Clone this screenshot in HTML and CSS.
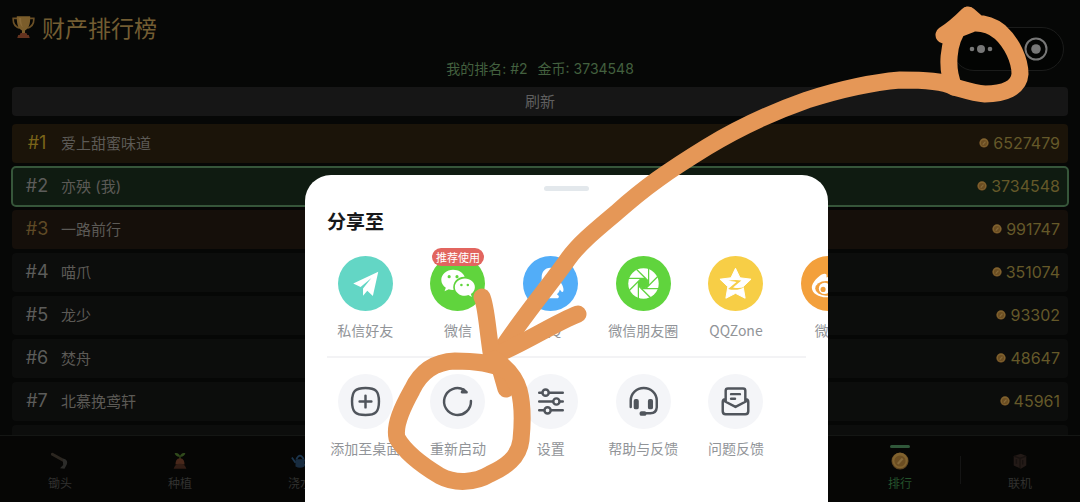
FILE: index.html
```
<!DOCTYPE html>
<html lang="zh-CN">
<head>
<meta charset="utf-8">
<meta name="viewport" content="width=device-width, initial-scale=1">
<title>财产排行榜</title>
<link rel="stylesheet" href="styles.css">
</head>
<body>
<svg class="defs" aria-hidden="true">
  <symbol id="coin" viewBox="0 0 20 20">
    <circle cx="10" cy="10" r="9.5" fill="#5e4420"/>
    <circle cx="10" cy="9.4" r="8.6" fill="#80622e"/>
    <circle cx="10" cy="10" r="6.2" fill="#6b4d22"/>
    <path d="M6.5 12.5 L12 6.5 L13.8 8 L8.5 13.8Z" fill="#85693a"/>
  </symbol>
</svg>
<div class="game">
  <header class="top">
    <h1 class="title">
      <svg class="trophy" viewBox="0 0 24 24" aria-hidden="true">
        <path d="M5.5 3H1.2C1 8 3 12 8 13.2M18.5 3h4.3C23 8 21 12 16 13.2" fill="none" stroke="#6b5026" stroke-width="1.7"/>
        <path d="M5 .8h14c.2 7-1 12.700-5.400 14.800v3h-3.200v-3C6 13.500 4.800 8 5 .8Z" fill="#7b5d2b"/>
        <path d="M7.500 2.500h2c0 4 .6 7.500 2 10-2.800-2-4-5.500-4-10Z" fill="#8a6a38"/>
        <path d="M9 18.300h6l1 2h1.500l1 3.200h-13l1-3.200H8Z" fill="#64331f"/>
      </svg>
      财产排行榜
    </h1>
    <div class="capsule">
      <button class="cap-btn" aria-label="更多"><svg class="dots" viewBox="0 0 24 10"><circle cx="3" cy="5" r="2.300"/><circle cx="12" cy="5" r="4"/><circle cx="21" cy="5" r="2.300"/></svg></button>
      <button class="cap-btn" aria-label="关闭"><svg class="target" viewBox="0 0 24 24"><circle cx="12" cy="12" r="10.500" fill="none" stroke="#777" stroke-width="2"/><circle cx="12" cy="12" r="4.800"/></svg></button>
    </div>
  </header>
  <p class="status"><span>我的排名: #2</span><span>金币: 3734548</span></p>
  <button class="refresh">刷新</button>
  <ol class="ranks">
    <li class="rank gold"><span class="no">#1</span><span class="name">爱上甜蜜味道</span><svg class="coin"><use href="#coin"/></svg><span class="value">6527479</span></li>
    <li class="rank me"><span class="no">#2</span><span class="name">亦殃 (我)</span><svg class="coin"><use href="#coin"/></svg><span class="value">3734548</span></li>
    <li class="rank bronze"><span class="no">#3</span><span class="name">一路前行</span><svg class="coin"><use href="#coin"/></svg><span class="value">991747</span></li>
    <li class="rank"><span class="no">#4</span><span class="name">喵爪</span><svg class="coin"><use href="#coin"/></svg><span class="value">351074</span></li>
    <li class="rank"><span class="no">#5</span><span class="name">龙少</span><svg class="coin"><use href="#coin"/></svg><span class="value">93302</span></li>
    <li class="rank"><span class="no">#6</span><span class="name">焚舟</span><svg class="coin"><use href="#coin"/></svg><span class="value">48647</span></li>
    <li class="rank"><span class="no">#7</span><span class="name">北慕挽鸢轩</span><svg class="coin"><use href="#coin"/></svg><span class="value">45961</span></li>
    <li class="rank"></li>
  </ol>
  <nav class="tabs">
    <button class="tab">
      <svg class="tab-icon" viewBox="0 0 20 20"><path d="M1.500 2.500 15 10" stroke="#2b2620" stroke-width="3.400" stroke-linecap="round"/><path d="M13 7.500c4 0 6 3 4.500 6.500L15 18.500l-5-.5 3.500-3.500Z" fill="#2c2c2a"/></svg>
      锄头
    </button>
    <button class="tab">
      <svg class="tab-icon" viewBox="0 0 20 20"><path d="M10 8V4" stroke="#304a1c" stroke-width="1.500"/><path d="M10 5C8 5.500 5 5 4 1.500 7 .5 9.500 2 10 5Zm0 0c2 .5 5 0 6-3.500C13 .5 10.500 2 10 5Z" fill="#304a1c"/><path d="M10 7c4 0 5 3.500 5 7h-10c0-3.500 1-7 5-7Z" fill="#49281b"/><path d="M3 18.500c1-4 4-5.500 7-5.500s6 1.500 7 5.500Z" fill="#321d15"/></svg>
      种植
    </button>
    <button class="tab">
      <svg class="tab-icon" viewBox="0 0 20 20"><path d="M5 8h10v8q-5 3-10 0Z" fill="#182c40"/><path d="M5 12 1 6M15 9q5 2 0 6M6 8q4-8 8 0" fill="none" stroke="#1c354d" stroke-width="2"/></svg>
      浇水
    </button>
    <button class="tab tab-rank active"><svg class="tab-icon"><use href="#coin"/></svg>排行</button>
    <button class="tab tab-online">
      <svg class="tab-icon" viewBox="0 0 20 20"><path d="M3 4.500 11 2l6 2.500V15l-6 3.500L3 15Z" fill="#231a17"/><path d="M3 4.500 10 7v11M10 7l7-2.500M6 8v5M13 9v5" stroke="#181210" stroke-width="1.500" fill="none"/></svg>
      联机
    </button>
  </nav>
</div>

<section class="sheet" aria-labelledby="share-title">
  <div class="handle"></div>
  <h2 class="sheet-title" id="share-title">分享至</h2>
  <div class="actions">
    <button class="action">
      <svg class="disc" viewBox="0 0 56 56"><circle cx="28" cy="28" r="28" fill="#63d6c5"/><path d="M41 16 15.500 28l7.500 3.500L34 22.500 25.500 33v7.500l4.300-5 5.700 5.200Z" fill="#fff"/></svg>
      私信好友
    </button>
    <button class="action">
      <svg class="disc" viewBox="0 0 56 56"><circle cx="28" cy="28" r="28" fill="#60d43d"/>
        <path d="M23.500 14C17 14 11.500 18.500 11.500 24.300c0 3.400 1.800 6.200 4.600 8.100l-1.300 3.600 4.300-2.200c1.500.5 3 .8 4.900.7-1.700-7.500 4-13.500 11.300-13.300C33.800 16.800 29 14 23.500 14Z" fill="#fff"/>
        <path d="M35.500 23c-5.500 0-10.200 3.700-10.200 8.700 0 5 4.700 8.700 10.200 8.700 1.300 0 2.500-.2 3.600-.6l3.500 2-1-3.200c2.500-1.600 4.100-4.100 4.100-6.900C45.700 26.700 41 23 35.500 23Z" fill="#fff"/>
        <g fill="#60d43d"><circle cx="19.500" cy="21" r="1.600"/><circle cx="27.500" cy="21" r="1.600"/><circle cx="32" cy="29.500" r="1.300"/><circle cx="38.500" cy="29.500" r="1.300"/></g></svg>
      微信
      <span class="badge">推荐使用</span>
    </button>
    <button class="action">
      <svg class="disc" viewBox="0 0 56 56"><circle cx="28" cy="28" r="28" fill="#52adf8"/><path d="M28 12c-6 0-9 4.500-9 10v3c-3 4-5 8-4 11 1 1.500 2.500-.5 3.500-2 .5 2 1.500 3.500 3 5-2 1-3 3-1 4h15c2-1 1-3-1-4 1.500-1.500 2.500-3 3-5 1 1.500 2.500 3.500 3.500 2 1-3-1-7-4-11v-3c0-5.500-3-10-9-10Z" fill="#fff"/></svg>
      QQ
    </button>
    <button class="action">
      <svg class="disc" viewBox="0 0 56 56"><circle cx="28" cy="28" r="28" fill="#60d43d"/><circle cx="28" cy="28" r="15.500" fill="#fff"/><circle cx="28" cy="28" r="5.200" fill="#60d43d"/>
        <g stroke="#60d43d" stroke-width="1.300"><path d="M33.200 30V13"/><path d="M33.200 30V13" transform="rotate(45 28 28)"/><path d="M33.200 30V13" transform="rotate(90 28 28)"/><path d="M33.200 30V13" transform="rotate(135 28 28)"/><path d="M33.200 30V13" transform="rotate(180 28 28)"/><path d="M33.200 30V13" transform="rotate(225 28 28)"/><path d="M33.200 30V13" transform="rotate(270 28 28)"/><path d="M33.200 30V13" transform="rotate(315 28 28)"/></g></svg>
      微信朋友圈
    </button>
    <button class="action">
      <svg class="disc" viewBox="0 0 56 56"><circle cx="28" cy="28" r="28" fill="#f7ce46"/><path d="m28 12.500 4.600 9.700 11.200 1.400-8 7.600 2 11.800L28 38l-9.800 5 2-11.800-8-7.600 11.200-1.400Z" fill="#fff" stroke="#fff" stroke-linejoin="round"/><path d="M20.500 25.500c4-1.200 9-1.300 13.500-.5l-8.500 7c4 .8 8 .8 12-.8-4 3.200-11 4-17 2.300l8.500-7c-3-.8-5.500-1-8.500-1Z" fill="#f7ce46"/></svg>
      QQZone
    </button>
    <button class="action">
      <svg class="disc" viewBox="0 0 56 56"><circle cx="28" cy="28" r="28" fill="#f3a03c"/><path d="M26 19c-1-2-5-1-8 2-4 3-7 8-7 11 0 6 7 10 15 10 9 0 16-5 16-11 0-3-3-5-6-5 2-6-4-7-10-4Z" fill="#fff"/><ellipse cx="25.500" cy="33" rx="11" ry="7.500" fill="#f3a03c"/><circle cx="24" cy="33" r="5.800" fill="#fff"/><circle cx="22.500" cy="34" r="2.600" fill="#f3a03c"/></svg>
      微博
    </button>
  </div>
  <hr class="rule">
  <div class="actions">
    <button class="action">
      <svg class="disc tool" viewBox="0 0 56 56"><circle class="plate" cx="28" cy="28" r="28"/><path d="M28 14.300c10.500 0 13.700 3.200 13.700 13.700S38.500 41.700 28 41.700 14.300 38.500 14.300 28 17.500 14.300 28 14.300ZM28 22v12M22 28h12"/></svg>
      添加至桌面
    </button>
    <button class="action">
      <svg class="disc tool" viewBox="0 0 56 56"><circle class="plate" cx="28" cy="28" r="28"/><path d="M41.700 27.500A13.700 13.700 0 1 1 34.500 16"/><path d="m32.500 18.500 4.800.1-3.300-2.800Z" fill="#50555c"/></svg>
      重新启动
    </button>
    <button class="action">
      <svg class="disc tool" viewBox="0 0 56 56"><circle class="plate" cx="28" cy="28" r="28"/><path d="M16.500 19h3M26.500 19H40.500M16.500 28h14M37.500 28h3M16.500 37h5M28.500 37h12"/><circle cx="23" cy="19" r="3.200"/><circle cx="34" cy="28" r="3.200"/><circle cx="25" cy="37" r="3.200"/></svg>
      设置
    </button>
    <button class="action">
      <svg class="disc tool" viewBox="0 0 56 56"><circle class="plate" cx="28" cy="28" r="28"/><path d="M15 33.500V27a13 12.500 0 0 1 26.500 0v7q-.5 6-6.500 6h-5"/><path d="M20 27.500h1.200v6.500h-1.200ZM34.500 27.500h1.200v6.500h-1.200ZM26 39.800h3v.8h-3Z" stroke-width="4"/></svg>
      帮助与反馈
    </button>
    <button class="action">
      <svg class="disc tool" viewBox="0 0 56 56"><circle class="plate" cx="28" cy="28" r="28"/><path d="M18 28V17q0-2.300 2.300-2.300h15.400Q38 14.700 38 17v11M18 25.500q-3 .5-3 3V38q0 3 3 3h20q3 0 3-3v-9.500q0-2.500-3-3M15.500 27 28 33.500 40.500 27M23.500 20.500h9M23.500 25.200h4"/></svg>
      问题反馈
    </button>
  </div>
</section>

<svg class="marker" viewBox="0 0 1080 502" aria-hidden="true">
  <path d="M944 35C952 30 961 22 968 15M944 35C965 20 985 20 1000 32 1012 43 1020 60 1020 74 1019 88 1004 94 985 94 972 93 962 89 954 87M954 87C946 70 947 42 960 26L968 15L976 22L958 29"/>
  <path d="M954 87C944 81 925 80 900 80 865 83 835 91 807 100 770 113 735 130 707 147 668 171 645 187 616 213 592 233 578 245 568 259 550 285 520 320 500 352"/>
  <path d="M482 297C486 305 487 325 491 352L500 368 506 389M578 314C555 323 530 340 498 354L497 366"/>
  <path d="M505 370C490 362 472 361 455 361 430 362 418 377 412 390 402 408 394 425 397 438 406 454 425 467 440 476 455 484 475 483 490 474 505 467 519 458 521 440 523 420 523 405 519 390 515 376 506 367 494 359"/>
</svg>
</body>
</html>
```

FILE: styles.css
```
* {
  box-sizing: border-box;
}

html,
body {
  height: 100%;
}

body {
  position: relative;
  margin: 0;
  overflow: hidden;
  background: #060706;
  color: #5c5a56;
  font-family: Inter, "Noto Sans CJK SC", sans-serif;
  font-weight: 400;
}

button {
  padding: 0;
  border: 0;
  background: none;
  color: inherit;
  font: inherit;
}

.defs {
  display: none;
}

.game {
  display: flex;
  flex-direction: column;
  height: 100%;
}

.top {
  display: flex;
  justify-content: space-between;
  height: 58px;
  padding: 8px 16px 0 12px;
}

.title {
  display: flex;
  align-items: center;
  gap: 7px;
  height: 38px;
  margin: 0;
  color: #735d32;
  font-size: 23px;
  font-weight: 400;
}

.trophy {
  width: 23px;
  height: 24px;
}

.capsule {
  display: flex;
  align-items: center;
  width: 112px;
  height: 44px;
  margin-top: 19px;
  border: 1px solid #1b1c1b;
  border-radius: 22px;
  background: #030403;
  fill: #777;
}

.cap-btn {
  display: flex;
  flex: 1;
  justify-content: center;
}

.dots {
  width: 24px;
  height: 10px;
}

.target {
  width: 24px;
  height: 24px;
}

.status {
  display: flex;
  justify-content: center;
  gap: 10px;
  margin: 0;
  color: #43603f;
  font-size: 14px;
  line-height: 21px;
}

.refresh {
  flex: none;
  height: 29px;
  margin: 8px 12px;
  padding-bottom: 2px;
  border-radius: 4px;
  background: #161616;
  color: #5f5f5f;
  font-size: 15px;
}

.ranks {
  display: flex;
  flex: 1;
  flex-direction: column;
  gap: 4px;
  min-height: 0;
  margin: 0;
  padding: 0 12px;
  overflow: hidden;
  list-style: none;
}

.rank {
  display: flex;
  flex: none;
  align-items: center;
  height: 39px;
  padding: 0 8px 2px;
  border-radius: 4px;
  background: #0c0d0c;
}

.gold {
  background: #1b1409;
}

.me {
  background: #0f1b11;
  outline: 2px solid #36563a;
  outline-offset: -1px;
}

.bronze {
  background: #150f0a;
}

.no {
  width: 34px;
  color: #5c5c5a;
  font-size: 18px;
  text-align: center;
}

.gold .no {
  color: #7a6419;
}

.bronze .no {
  color: #5f4a26;
}

.name {
  flex: 1;
  margin-left: 7px;
  font-size: 15px;
}

.coin {
  width: 10px;
  height: 10px;
  margin-right: 4px;
}

.value {
  color: #655929;
  font-size: 16px;
}

.tabs {
  display: grid;
  flex: none;
  grid-template-columns: repeat(9, 1fr);
  height: 67px;
  border-top: 1px solid #141614;
  background: #060605;
  color: #31312f;
}

.tab {
  display: flex;
  position: relative;
  flex-direction: column;
  align-items: center;
  gap: 5px;
  padding-top: 16px;
  font-size: 12px;
  line-height: 18px;
}

.tab-icon {
  width: 18px;
  height: 18px;
}

.tab-rank {
  grid-column: 8;
}

.active {
  color: #24532c;
}

.active::before {
  position: absolute;
  top: 9px;
  width: 20px;
  height: 3px;
  border-radius: 2px;
  background: #30583a;
  content: "";
}

.tab-online::before {
  position: absolute;
  top: 20px;
  left: 0;
  width: 1px;
  height: 28px;
  background: #141414;
  content: "";
}

.sheet {
  position: absolute;
  top: 175px;
  bottom: 0;
  left: calc(50% - 235px);
  width: 523px;
  padding-top: 11px;
  overflow: hidden;
  border-radius: 26px 26px 0 0;
  background: #fff;
  color: #919498;
  font-family: "Noto Sans CJK SC", sans-serif;
}

.handle {
  width: 45px;
  height: 5px;
  margin: 0 auto;
  border-radius: 3px;
  background: #e3e8ec;
}

.sheet-title {
  margin: 15px 22px 20px;
  color: #17181a;
  font-size: 19px;
  font-weight: 700;
  line-height: 30px;
}

.actions {
  display: grid;
  grid-template-columns: repeat(6, 1fr);
  margin: 0 -47px 0 14px;
}

.action {
  display: flex;
  position: relative;
  flex-direction: column;
  align-items: center;
  gap: 9px;
  font-size: 14px;
  line-height: 20px;
  white-space: nowrap;
}

.disc {
  width: 55px;
  height: 55px;
}

.tool {
  fill: none;
  stroke: #50555c;
  stroke-linecap: round;
  stroke-linejoin: round;
  stroke-width: 2.5;
}

.plate {
  fill: #f4f5f8;
  stroke: none;
}

.badge {
  position: absolute;
  top: -8px;
  padding: 0 4px;
  border-radius: 9px;
  background: #e2655f;
  color: #fff;
  font-size: 11px;
  line-height: 18px;
}

.rule {
  height: 2px;
  margin: 16px 22px;
  border: 0;
  background: #f3f3f5;
}

.marker {
  position: absolute;
  inset: 0;
  width: 100%;
  height: 100%;
  fill: none;
  stroke: #e59757;
  stroke-linecap: round;
  stroke-linejoin: round;
  stroke-width: 17;
  pointer-events: none;
}
```
